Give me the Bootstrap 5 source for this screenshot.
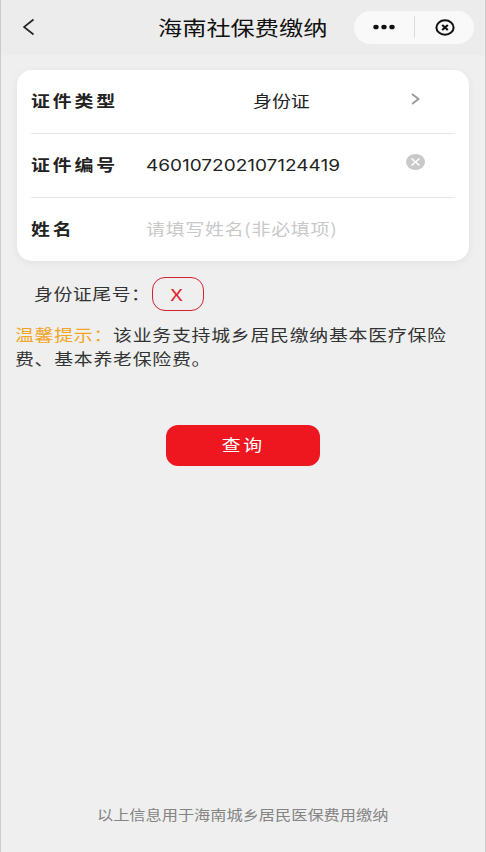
<!DOCTYPE html>
<html lang="zh-CN">
<head>
<meta charset="utf-8">
<meta name="viewport" content="width=device-width, initial-scale=1">
<title>海南社保费缴纳</title>
<link href="https://cdn.jsdelivr.net/npm/bootstrap@5.3.0/dist/css/bootstrap.min.css" rel="stylesheet">
<style>
body{background:#efefef;font-family:"Noto Sans CJK SC",sans-serif;font-size:16px;color:#333;overflow:hidden}
.screen{height:852px;border-left:1px solid #cbcbcb;border-right:1px solid #cbcbcb}
.topbar{height:55px;background:#ececec;padding:0 11px 1px 21px}
.wide{display:inline-block;white-space:nowrap;transform:scaleX(1.18);transform-origin:0 50%}
.page-title{font-size:20px;line-height:28px;color:#111;width:170px;margin:0 26px 0 123px;padding-top:1px}
.page-title .wide{transform:scaleX(1.21)}
.capsule{width:120px;height:33px;background:#f9f9f9}
.capsule .half{width:60px;flex:none}
.capsule .half:last-child{width:59px}
.capsule .rule{width:1px;height:22px;background:#dcdcdc}
.form-panel{margin:15px 16px 0;height:191px;border-radius:15px;background:#fff;padding:0 14px;box-shadow:0 2px 8px rgba(0,0,0,.06)}
.line{height:64px;padding-bottom:4px}
.line:first-child{height:63px;padding-bottom:3px}
.line+.line{border-top:1px solid #e8e8e8}
.line svg{margin-right:30px}
.line .chevron{margin-right:35px;margin-bottom:2px}
.caption{width:115px;font-weight:700;color:#222}
.caption .wide{letter-spacing:2.4px}
.value{color:#222}
.digits{font-family:Inter,"Liberation Sans",sans-serif;font-size:16px;padding-top:2px}
.digits .wide{transform:scaleX(1.187)}
.kind{margin-left:107px}
.hint{color:#c9c9c9;letter-spacing:.6px}
.hint .wide{transform:scaleX(1.185)}
.tail{height:34px;margin:16px 0 0 33px}
.tail-label{width:118px;padding-bottom:2px}
.tail-label .wide{letter-spacing:.45px}
.body-text{letter-spacing:.63px;color:#333}
.tail-key{width:52px;height:34px;border:1.5px solid #d2222c;border-radius:13px;color:#e02832;line-height:1;padding-right:2px}
.tail-key .wide{transform:scaleX(1.38);transform-origin:50% 50%}
.tip{margin:11px 0 0 14px;line-height:24px}
.tip-mark{color:#f3a51f}
.query{width:154px;height:41px;margin:55px auto 0;border:0;border-radius:12px;background:#ee171f;color:#fff;padding:0 0 4px}
.query:hover{background:#ee171f;color:#fff}
.query .wide{transform-origin:50% 50%;letter-spacing:2.2px;font-size:16px}
.foot{margin:0 0 27px 96px;font-size:14px;line-height:22px;color:#848484}
.foot .wide{transform:scaleX(1.156)}
</style>
<script src="https://cdn.jsdelivr.net/npm/bootstrap@5.3.0/dist/js/bootstrap.bundle.min.js"></script>
</head>
<body>
<div class="screen d-flex flex-column">
  <header class="topbar d-flex align-items-center flex-shrink-0">
    <svg width="13" height="18" viewBox="0 0 13 18" fill="none" stroke="#222" stroke-width="1.6"><path d="M11.500 1.500 2 9l9.500 7.500"/></svg>
    <h1 class="page-title fw-normal mb-0"><span class="wide">海南社保费缴纳</span></h1>
    <div class="capsule rounded-pill d-flex align-items-center flex-shrink-0">
      <div class="half d-flex justify-content-center"><svg width="22" height="6" viewBox="0 0 22 6" fill="#111"><ellipse cx="3" cy="3" rx="2.700" ry="2.300"/><ellipse cx="11" cy="3" rx="2.700" ry="2.300"/><ellipse cx="19" cy="3" rx="2.700" ry="2.300"/></svg></div>
      <div class="rule"></div>
      <div class="half d-flex justify-content-center"><svg width="20" height="17" viewBox="0 0 20 17" fill="none" stroke="#111"><ellipse cx="10" cy="8.500" rx="8.600" ry="7.200" stroke-width="2"/><path d="m7.200 6 5.600 5M12.800 6l-5.600 5" stroke-width="2.200"/></svg></div>
    </div>
  </header>

  <main class="flex-grow-1">
    <section class="form-panel">
      <div class="line d-flex align-items-center">
        <div class="caption"><span class="wide">证件类型</span></div>
        <div class="value kind"><span class="wide">身份证</span></div>
        <svg class="chevron ms-auto" width="9" height="12" viewBox="0 0 9 12" fill="none" stroke="#999" stroke-width="1.800"><path d="m1 1 6.500 5L1 11"/></svg>
      </div>
      <div class="line d-flex align-items-center">
        <div class="caption"><span class="wide">证件编号</span></div>
        <div class="value digits"><span class="wide">460107202107124419</span></div>
        <svg class="ms-auto mb-1" width="19" height="16" viewBox="0 0 19 16"><ellipse cx="9.500" cy="8" rx="9.500" ry="8" fill="#c9c9c9"/><path d="m5.500 4.500 8 7m0-7-8 7" stroke="#fff" stroke-width="1.600"/></svg>
      </div>
      <div class="line d-flex align-items-center">
        <div class="caption"><span class="wide">姓名</span></div>
        <div class="hint"><span class="wide">请填写姓名(非必填项)</span></div>
      </div>
    </section>

    <div class="tail d-flex align-items-center">
      <div class="tail-label body-text"><span class="wide">身份证尾号：</span></div>
      <div class="tail-key d-flex align-items-center justify-content-center"><span class="wide">X</span></div>
    </div>

    <p class="tip body-text mb-0"><span class="wide"><span class="tip-mark">温馨提示：</span>该业务支持城乡居民缴纳基本医疗保险<br>费、基本养老保险费。</span></p>

    <button type="button" class="query btn d-block"><span class="wide">查询</span></button>
  </main>

  <footer class="foot"><span class="wide">以上信息用于海南城乡居民医保费用缴纳</span></footer>
</div>
</body>
</html>
